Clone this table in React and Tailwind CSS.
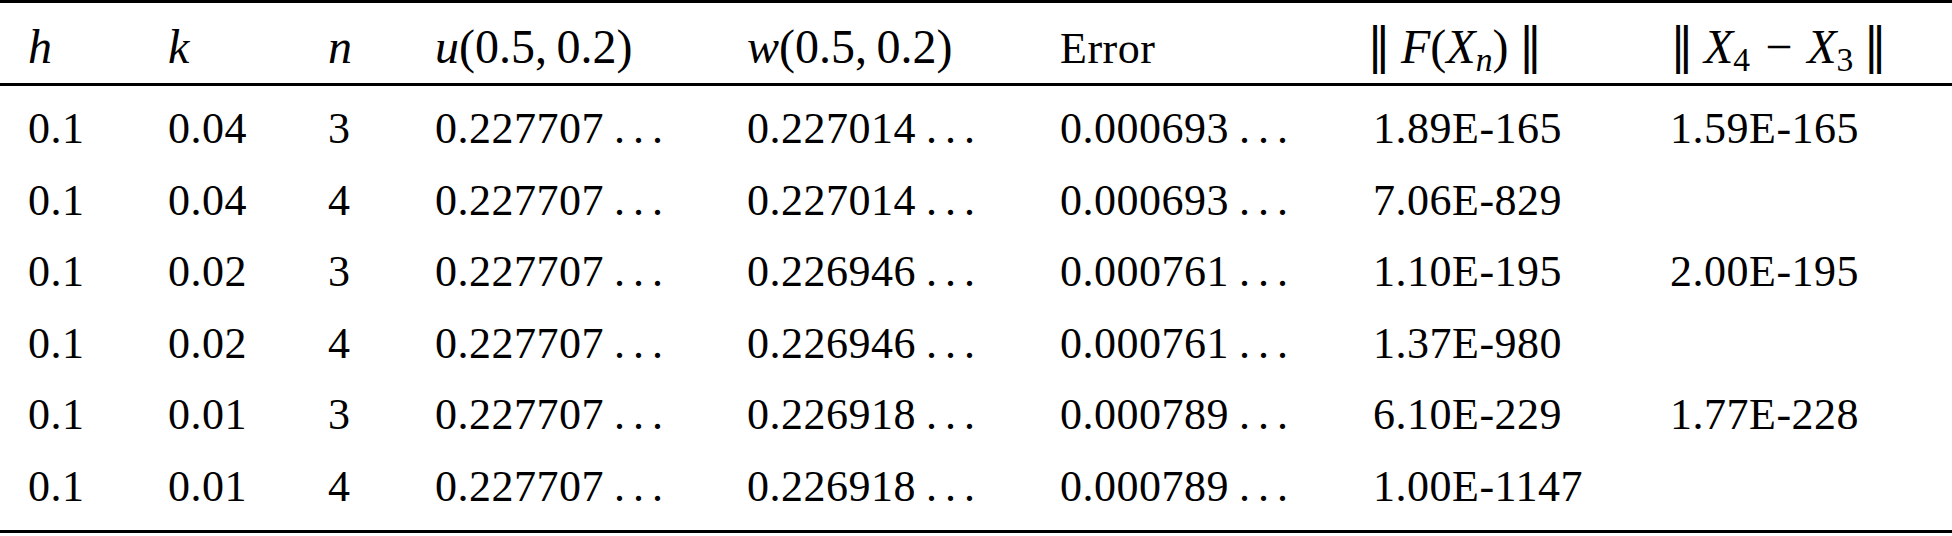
import React from "react";

const rows = [
    ["0.1", "0.04", "3", "0.227707", "0.227014", "0.000693", "1.89E-165", "1.59E-165"],
    ["0.1", "0.04", "4", "0.227707", "0.227014", "0.000693", "7.06E-829", ""],
    ["0.1", "0.02", "3", "0.227707", "0.226946", "0.000761", "1.10E-195", "2.00E-195"],
    ["0.1", "0.02", "4", "0.227707", "0.226946", "0.000761", "1.37E-980", ""],
    ["0.1", "0.01", "3", "0.227707", "0.226918", "0.000789", "6.10E-229", "1.77E-228"],
    ["0.1", "0.01", "4", "0.227707", "0.226918", "0.000789", "1.00E-1147", ""],
];

const cols = "grid grid-cols-[140px_160px_107px_312px_313px_313px_297px_1fr] pl-[28px]";

const Dots = () => (
    <span className="ml-[10px] tracking-[8px]">...</span>
);

const Norm = ({ children }) => (
    <span className="inline-flex items-baseline">
        <span className="font-[family-name:DejaVu_Serif,serif] font-light">‖</span>
        <span className="px-[10px]">{children}</span>
        <span className="font-[family-name:DejaVu_Serif,serif] font-light">‖</span>
    </span>
);

const Header = () => (
    <div className={`${cols} h-[83px] pt-[19px] items-baseline border-b-[3px] border-black`}>
        <div className="text-[48px] leading-none italic">h</div>
        <div className="text-[48px] leading-none italic">k</div>
        <div className="text-[48px] leading-none italic">n</div>
        <div className="text-[48px] leading-none">
            <i>u</i>(0.5,&thinsp;0.2)
        </div>
        <div className="text-[48px] leading-none">
            <i>w</i>(0.5,&thinsp;0.2)
        </div>
        <div className="text-[44px] leading-none tracking-[0.5px]">Error</div>
        <div className="text-[48px] leading-none -ml-[6px]">
            <Norm>
                <i>F</i>(<i>X</i><sub className="italic text-[0.7em]">n</sub>)
            </Norm>
        </div>
        <div className="text-[48px] leading-none">
            <Norm>
                <i>X</i><sub className="text-[0.7em]">4</sub>
                <span className="px-[15px]">−</span>
                <i>X</i><sub className="text-[0.7em]">3</sub>
            </Norm>
        </div>
    </div>
);

export default function App() {
    return (
        <div className="w-[1952px] h-[536px] bg-white text-black font-[family-name:Liberation_Serif,Times_New_Roman,serif]">
            <div className="border-t-[3px] border-b-[3px] border-black">
                <Header />
                <div className="pt-[7px] pb-[7px]">
                    {rows.map((r, i) => (
                        <div key={i} className={`${cols} h-[71.6px] text-[44px] leading-[71.6px] tracking-[0.5px]`}>
                            {r.map((cell, j) => (
                                <div key={j} className="whitespace-nowrap">
                                    {cell}
                                    {j >= 3 && j <= 5 && <Dots />}
                                </div>
                            ))}
                        </div>
                    ))}
                </div>
            </div>
        </div>
    );
}
